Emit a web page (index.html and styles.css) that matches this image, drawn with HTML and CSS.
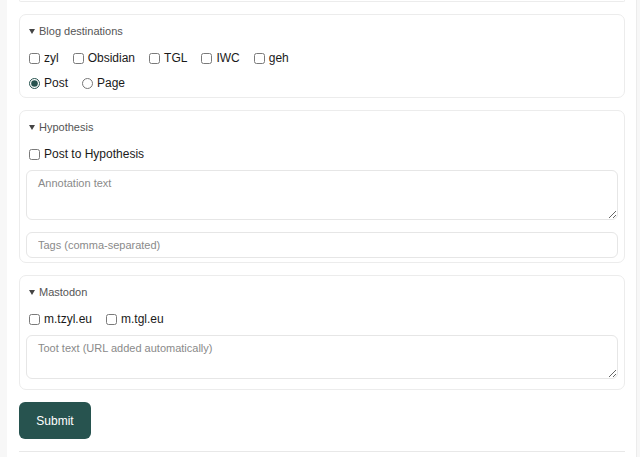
FILE: index.html
```html
<!DOCTYPE html>
<html lang="en">
<head>
<meta charset="utf-8">
<title>Publish</title>
<link rel="stylesheet" href="styles.css">
</head>
<body>
<main class="page">
  <div class="stub"></div>
  <form class="form">
    <details class="card" open>
      <summary class="summary">Blog destinations</summary>
      <div class="body">
        <div class="row">
          <label class="opt"><input type="checkbox" class="cb"><span>zyl</span></label>
          <label class="opt"><input type="checkbox" class="cb"><span>Obsidian</span></label>
          <label class="opt"><input type="checkbox" class="cb"><span>TGL</span></label>
          <label class="opt"><input type="checkbox" class="cb"><span>IWC</span></label>
          <label class="opt"><input type="checkbox" class="cb"><span>geh</span></label>
        </div>
        <div class="row">
          <label class="opt"><input type="radio" name="kind" class="rb" checked><span>Post</span></label>
          <label class="opt"><input type="radio" name="kind" class="rb"><span>Page</span></label>
        </div>
      </div>
    </details>

    <details class="card" open>
      <summary class="summary">Hypothesis</summary>
      <div class="body">
        <div class="row">
          <label class="opt"><input type="checkbox" class="cb"><span>Post to Hypothesis</span></label>
        </div>
        <textarea class="field area area-annot" placeholder="Annotation text"></textarea>
        <input type="text" class="field line" placeholder="Tags (comma-separated)">
      </div>
    </details>

    <details class="card" open>
      <summary class="summary">Mastodon</summary>
      <div class="body">
        <div class="row">
          <label class="opt"><input type="checkbox" class="cb"><span>m.tzyl.eu</span></label>
          <label class="opt"><input type="checkbox" class="cb"><span>m.tgl.eu</span></label>
        </div>
        <textarea class="field area area-toot" placeholder="Toot text (URL added automatically)"></textarea>
      </div>
    </details>

    <div class="actions">
      <button type="button" class="submit">Submit</button>
    </div>
    <hr class="rule">
  </form>
</main>
</body>
</html>
```

FILE: styles.css
```css
* { box-sizing: border-box; }

html, body {
  margin: 0;
  padding: 0;
}

body {
  background: #f7f7f7;
  font-family: "Liberation Sans", Arial, sans-serif;
  color: #222;
  height: 457px;
  overflow: hidden;
}

.page {
  margin-left: 7px;
  width: 630px;
  min-height: 457px;
  background: #fff;
  border-right: 1px solid #ececec;
  padding: 0 11px 0 12px;
}

.stub {
  height: 2px;
  border: 1px solid #ececec;
  border-top: none;
  border-radius: 0 0 6px 6px;
  margin-bottom: 12px;
}

.form {
  display: flex;
  flex-direction: column;
  gap: 12px;
}

.card {
  border: 1px solid #ececec;
  border-radius: 7px;
  padding: 9px 6px 4px 6px;
}

.summary {
  list-style: none;
  display: flex;
  align-items: center;
  gap: 4px;
  padding-left: 3px;
  font-size: 11px;
  line-height: 14px;
  color: #555;
  cursor: pointer;
}

.summary::-webkit-details-marker { display: none; }

.summary::before {
  content: "";
  width: 0;
  height: 0;
  border-left: 3px solid transparent;
  border-right: 3px solid transparent;
  border-top: 5px solid #444;
}

.body {
  margin-top: 11px;
  display: flex;
  flex-direction: column;
  gap: 6px;
}

.row {
  display: flex;
  align-items: center;
  gap: 14px;
  height: 19px;
  padding-left: 3px;
}

.opt {
  display: flex;
  align-items: center;
  gap: 4px;
  font-size: 12px;
  line-height: 15px;
  color: #1a1a1a;
}

.cb {
  -webkit-appearance: none;
  appearance: none;
  margin: 0;
  width: 11px;
  height: 11px;
  border: 1px solid #7a7a7a;
  border-radius: 2.5px;
  background: #fff;
}

.rb {
  margin: 0;
  width: 11px;
  height: 11px;
  accent-color: #27534f;
}

.field {
  display: block;
  width: 100%;
  border: 1px solid #e6e6e6;
  border-radius: 6px;
  font-family: "Liberation Sans", Arial, sans-serif;
  font-size: 11px;
  color: #222;
  background: #fff;
  outline: none;
}

.field::placeholder { color: #8a8a8a; }

.area {
  padding: 6px 11px;
  line-height: 13px;
  resize: vertical;
  margin-bottom: 6px;
}

.area-annot { height: 50px; }
.area-toot { height: 44px; }

.line {
  height: 26px;
  padding: 0 11px;
}

.actions {
  display: flex;
}

.submit {
  width: 72px;
  height: 37px;
  border: none;
  border-radius: 6px;
  background: #27534f;
  color: #fff;
  font-family: "Liberation Sans", Arial, sans-serif;
  font-size: 12px;
}

.rule {
  margin: 0;
  border: none;
  border-top: 1px solid #e8e8e8;
  height: 0;
}
```
